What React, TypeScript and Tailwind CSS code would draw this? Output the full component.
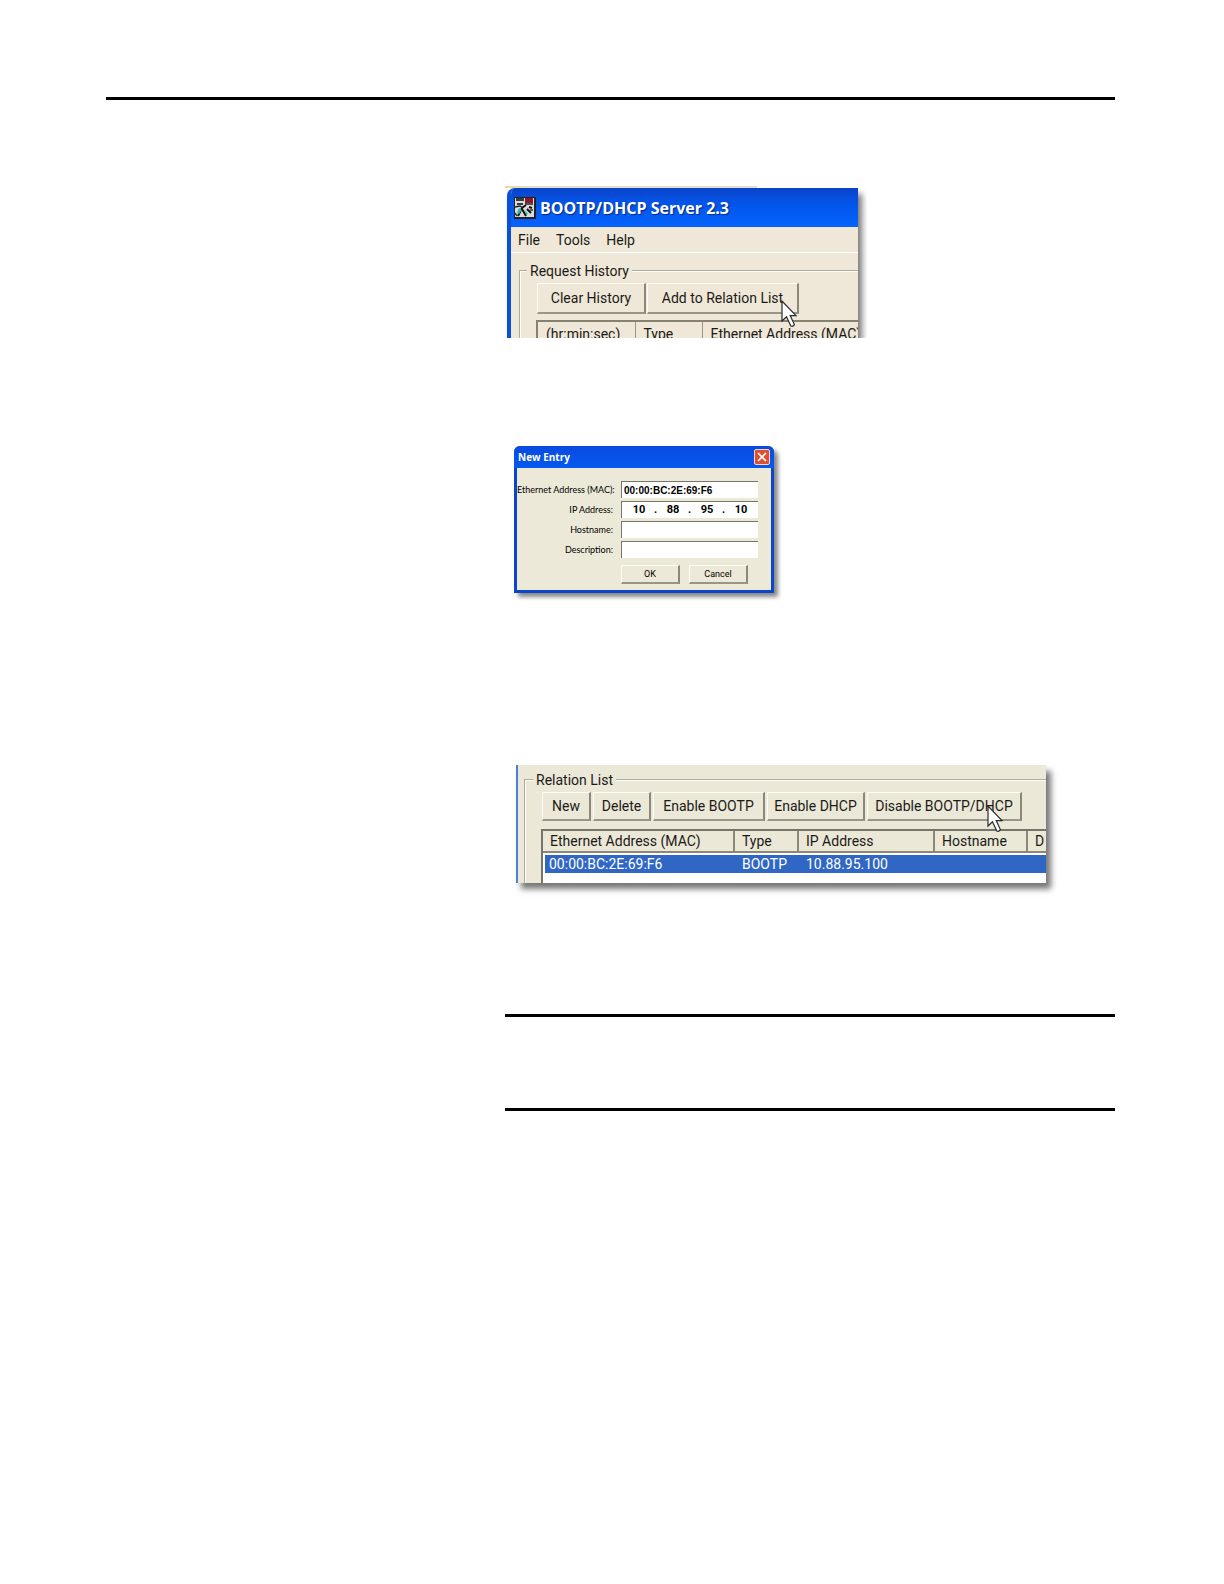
import type { ReactNode } from 'react';

const requestColumns = [
  { label: '(hr:min:sec)', width: 'w-[98px]' },
  { label: 'Type', width: 'w-[67px]' },
  { label: 'Ethernet Address (MAC)', width: 'w-[180px]' },
];

const relationColumns = [
  { label: 'Ethernet Address (MAC)', value: '00:00:BC:2E:69:F6', width: 'w-[192px]' },
  { label: 'Type', value: 'BOOTP', width: 'w-[64px]' },
  { label: 'IP Address', value: '10.88.95.100', width: 'w-[136px]' },
  { label: 'Hostname', value: '', width: 'w-[93px]' },
  { label: 'D', value: '', width: 'w-[120px]' },
];

function Cursor({ className }: { className: string }) {
  return (
    <svg className={`absolute ${className}`} width="17" height="28" viewBox="0 0 17 28" fill="none">
      <path
        d="M1 1v20l4.5-4.3 4.3 9.3q2 1.2 3.6-1.4L9.2 15.6H15z"
        fill="#fff"
        stroke="#2b2b2b"
        strokeWidth="1.2"
      />
    </svg>
  );
}

function AppIcon() {
  return (
    <svg width="22" height="22" viewBox="0 0 22 22">
      <path d="M0 0h22v22H0z" fill="#222" />
      <path d="M1 1h19v19H1z" fill="#d9dcda" />
      <path d="M2 1h8v3H2zM3 6h6v2H3z" fill="#2f3f3f" />
      <path d="M11 1h8v5h-8z" fill="#8d1526" />
      <path d="M11 7h8M1 10l5-1 3 2" stroke="#222" strokeWidth="1.4" fill="none" />
      <path d="M8 11l4-3M8 11l-4 8M8 12l4 7M13 12l4 4M15 10l3 1" stroke="#111" strokeWidth="2" fill="none" />
      <path d="M5 11l3 2-3 4-2-1zM11 13l3 4-2 1z" fill="#33b5ae" />
      <path d="M1 16l2 3M16 13h3" stroke="#333" strokeWidth="1.4" />
    </svg>
  );
}

function ToolButton({ children, className }: { children: ReactNode; className: string }) {
  return (
    <button
      className={`shrink-0 border-t border-r-2 border-b-2 border-l border-t-[#fffdf5] border-r-[#8b8779] border-b-[#9a9586] border-l-[#fffdf5] text-center whitespace-nowrap ${className}`}
    >
      {children}
    </button>
  );
}

function ServerWindow() {
  return (
    <section className="w-full max-w-[362px] overflow-hidden pr-[9px]">
      <div className="h-[2px] w-[252px] bg-linear-to-r from-[#f4d68a] via-[#e4dfce] via-10% to-[#e4dfce]" />
      <div className="relative ml-[2px] h-[150px] rounded-tl-lg bg-[#efe8d8] font-[Roboto,sans-serif] text-sm leading-[18px] text-[#1b1a17] shadow-[4px_6px_6px_#777]">
        <div className="h-full overflow-hidden rounded-tl-lg border-l-4 border-[#0a50d8]">
          <header className="flex h-[39px] items-center gap-1 bg-linear-to-b from-[#0a43c8] via-[#0355ea] via-40% to-[#0563ff] pl-[3px]">
            <AppIcon />
            <h1 className="font-['Open_Sans',sans-serif] text-base font-bold whitespace-nowrap text-white [text-shadow:1px_1px_1px_#0a2a80]">
              BOOTP/DHCP Server 2.3
            </h1>
          </header>
          <nav className="flex h-[26px] items-center gap-4 border-b border-white pl-[7px]">
            <button>File</button>
            <button>Tools</button>
            <button>Help</button>
          </nav>
          <fieldset className="mt-[9px] ml-2 h-[120px] w-[400px] border-2 border-[#fffdf3] pl-4 [border-style:groove]">
            <legend className="-ml-[10px] px-[3px]">Request History</legend>
            <div className="mt-[3px] flex gap-px">
              <ToolButton className="h-[31px] w-[109px]">Clear History</ToolButton>
              <ToolButton className="h-[31px] w-[152px]">Add to Relation List</ToolButton>
            </div>
            <table className="mt-[6px] -ml-px table-fixed border-t-2 border-l-2 border-[#86826f] text-left">
              <thead>
                <tr>
                  {requestColumns.map((c) => (
                    <th
                      key={c.label}
                      className={`h-6 border-r border-[#9a9586] pl-2 font-normal whitespace-nowrap ${c.width}`}
                    >
                      {c.label}
                    </th>
                  ))}
                </tr>
              </thead>
            </table>
          </fieldset>
        </div>
        <Cursor className="top-28 left-[274px]" />
      </div>
    </section>
  );
}

function Field({ id, label, children }: { id: string; label: string; children: ReactNode }) {
  return (
    <div className="flex items-center gap-2">
      <label htmlFor={id} className="w-24 text-right font-[Lato,sans-serif] text-[9px] whitespace-nowrap">
        {label}
      </label>
      {children}
    </div>
  );
}

const inputStyle =
  'h-[17px] w-[137px] border-t border-l border-[#77756a] bg-white pl-[2px] leading-[14px] font-bold';

function NewEntryDialog() {
  return (
    <section className="ml-[9px] w-full max-w-[260px] rounded-t-md border-3 border-t-0 border-[#0b46c8] bg-[#ece9d8] font-[Roboto,sans-serif] text-black shadow-[4px_4px_4px_#888]">
      <header className="-mx-[3px] flex h-[22px] items-center justify-between rounded-t-md bg-linear-to-b from-[#0a4be0] to-[#0558ee] px-1">
        <h2 className="font-['Open_Sans',sans-serif] text-[10px] font-bold text-white">New Entry</h2>
        <button aria-label="Close" className="flex size-4 items-center justify-center rounded-xs border border-[#f3d5cf] bg-[#dc5033]">
          <svg width="10" height="10" viewBox="0 0 10 10" stroke="#fff" strokeWidth="1.6">
            <path d="M1 1l8 8M9 1L1 9" />
          </svg>
        </button>
      </header>
      <form className="flex flex-col gap-[3px] pt-[13px] pb-[6px]" onSubmit={(e) => e.preventDefault()}>
        <Field id="mac" label="Ethernet Address (MAC):">
          <input id="mac" defaultValue="00:00:BC:2E:69:F6" className={`${inputStyle} font-['Liberation_Sans',sans-serif] text-[10px]`} />
        </Field>
        <Field id="ip" label="IP Address:">
          <div className={`flex items-center text-[11px] ${inputStyle}`}>
            {['10', '88', '95', '10'].map((octet, i) => (
              <span key={i} className="flex">
                {i > 0 && <span className="w-1">.</span>}
                <input
                  id={i === 0 ? 'ip' : undefined}
                  aria-label={`IP octet ${i + 1}`}
                  defaultValue={octet}
                  className="w-[30px] text-center"
                />
              </span>
            ))}
          </div>
        </Field>
        <Field id="host" label="Hostname:">
          <input id="host" className={inputStyle} />
        </Field>
        <Field id="desc" label="Description:">
          <input id="desc" className={inputStyle} />
        </Field>
        <div className="mt-1 ml-[104px] flex gap-[9px] text-[9px] leading-[14px]">
          <ToolButton className="h-[19px] w-[59px]">OK</ToolButton>
          <ToolButton className="h-[19px] w-[59px]">Cancel</ToolButton>
        </div>
      </form>
    </section>
  );
}

function RelationList() {
  return (
    <section className="relative ml-[11px] h-[118px] w-full max-w-[530px] bg-[#ebe8d8] font-[Roboto,sans-serif] text-sm leading-[18px] text-[#1b1a17] shadow-[5px_6px_6px_#777]">
      <div className="h-full overflow-hidden border-l-2 border-[#4d80dc]">
        <fieldset className="mt-[6px] ml-[6px] h-[130px] w-[560px] border-2 border-[#fffdf3] pl-4 [border-style:groove]">
          <legend className="-ml-[9px] px-[3px]">Relation List</legend>
          <div className="mt-[3px] flex gap-[2px]">
            <ToolButton className="h-[29px] w-[49px]">New</ToolButton>
            <ToolButton className="h-[29px] w-[58px]">Delete</ToolButton>
            <ToolButton className="h-[29px] w-[112px]">Enable BOOTP</ToolButton>
            <ToolButton className="h-[29px] w-[98px]">Enable DHCP</ToolButton>
            <ToolButton className="h-[29px] w-[155px]">Disable BOOTP/DHCP</ToolButton>
          </div>
          <div className="mt-2 -ml-px h-16 border-t-2 border-l-2 border-[#77746a] bg-white">
            <table className="w-[605px] table-fixed border-separate border-spacing-0 text-left">
              <thead className="bg-[#ebe8d8]">
                <tr>
                  {relationColumns.map((c) => (
                    <th
                      key={c.label}
                      className={`h-[22px] border-r-2 border-b-2 border-[#8b8779] pl-[7px] font-normal whitespace-nowrap ${c.width}`}
                    >
                      {c.label}
                    </th>
                  ))}
                </tr>
              </thead>
              <tbody className="text-white">
                <tr>
                  {relationColumns.map((c, i) => (
                    <td
                      key={c.label}
                      className={`border-t-2 border-white bg-[#3067c4] ${i === 0 ? 'border-l-2 pl-1' : 'pl-[7px]'}`}
                    >
                      {c.value}
                    </td>
                  ))}
                </tr>
              </tbody>
            </table>
          </div>
        </fieldset>
      </div>
      <Cursor className="top-10 left-[471px]" />
    </section>
  );
}

export default function App() {
  return (
    <main className="min-h-screen bg-white pt-[97px] pr-[109px] pb-16 pl-[106px]">
      <hr className="border-t-3 border-black" />
      <div className="ml-[399px]">
        <div className="pt-[86px]">
          <ServerWindow />
        </div>
        <div className="pt-[108px]">
          <NewEntryDialog />
        </div>
        <div className="pt-[172px]">
          <RelationList />
        </div>
        <hr className="mt-[131px] border-t-3 border-black" />
        <hr className="mt-[91px] border-t-3 border-black" />
      </div>
    </main>
  );
}
